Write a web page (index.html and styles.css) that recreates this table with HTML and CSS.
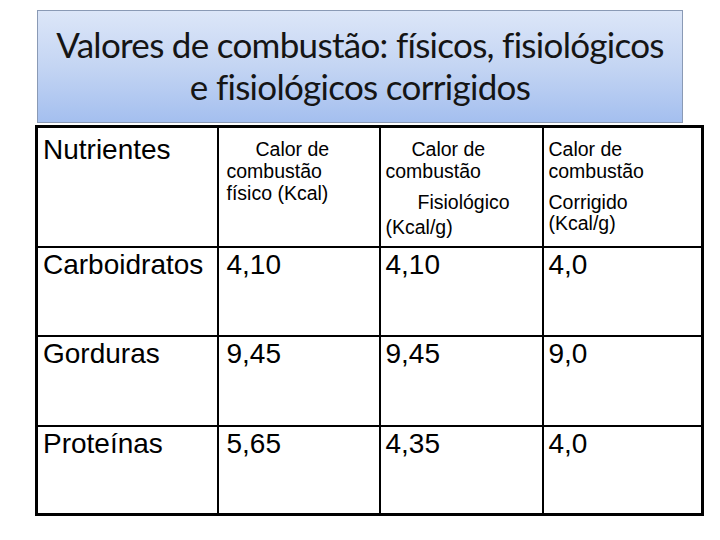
FILE: index.html
```html
<!DOCTYPE html>
<html lang="pt">
<head>
<meta charset="utf-8">
<title>Valores de combustão</title>
<link rel="stylesheet" href="styles.css">
</head>
<body>
<div class="slide">
  <div class="title-box">
    <h1 class="title">Valores de combustão: físicos, fisiológicos<br>e fisiológicos corrigidos</h1>
  </div>
  <table class="grid">
    <colgroup>
      <col class="c1"><col class="c2"><col class="c3"><col class="c4">
    </colgroup>
    <tr class="head">
      <td class="lead">Nutrientes</td>
      <td class="small col2">
        <div class="ind1">Calor de</div>
        <div>combustão</div>
        <div>físico (Kcal)</div>
      </td>
      <td class="small">
        <div class="ind2">Calor de</div>
        <div>combustão</div>
        <div class="ind3 gap">Fisiológico</div>
        <div class="gap2">(Kcal/g)</div>
      </td>
      <td class="small">
        <div>Calor de</div>
        <div>combustão</div>
        <div class="gap">Corrigido</div>
        <div class="tight">(Kcal/g)</div>
      </td>
    </tr>
    <tr class="r1">
      <td>Carboidratos</td><td class="col2">4,10</td><td>4,10</td><td>4,0</td>
    </tr>
    <tr class="r2">
      <td>Gorduras</td><td class="col2">9,45</td><td>9,45</td><td>9,0</td>
    </tr>
    <tr class="r3">
      <td>Proteínas</td><td class="col2">5,65</td><td>4,35</td><td>4,0</td>
    </tr>
  </table>
</div>
</body>
</html>
```
FILE: styles.css
```css
html, body {
  margin: 0;
  padding: 0;
  background: #ffffff;
}
.slide {
  width: 720px;
  height: 540px;
  padding-top: 10px;
  box-sizing: border-box;
}
.title-box {
  margin-left: 37px;
  width: 646px;
  height: 113px;
  box-sizing: border-box;
  border: 1px solid #8a9ab5;
  background: linear-gradient(to bottom, #dce6f8 0%, #c4d5f3 50%, #a4bfef 100%);
  display: flex;
  align-items: center;
  justify-content: center;
}
.title {
  margin: 0;
  font-family: Lato, "Open Sans", sans-serif;
  font-weight: normal;
  font-size: 35px;
  line-height: 42px;
  color: #151515;
  text-align: center;
  white-space: nowrap;
  letter-spacing: -0.7px;
  padding-bottom: 4px;
}
.grid {
  margin-top: 2px;
  margin-left: 35px;
  width: 666px;
  border-collapse: collapse;
  table-layout: fixed;
  border: 3px solid #000;
  font-family: "Liberation Sans", Arial, sans-serif;
  color: #000;
}
.c1 { width: 181px; }
.c2 { width: 162px; }
.c3 { width: 163px; }
.c4 { width: 160px; }
.grid td {
  border: 2px solid #000;
  vertical-align: top;
  padding: 1px 0 0 5px;
  font-size: 28px;
  line-height: 32px;
}
.grid td.col2 { padding-left: 8px; }
.head { height: 120px; }
.r1 { height: 89px; }
.r2 { height: 90px; }
.r3 { height: 89px; }
.grid td.lead {
  padding-top: 6px;
}
.grid td.small {
  font-size: 19.5px;
  line-height: 22px;
  padding-top: 10px;
}
.ind1 { padding-left: 29px; }
.ind2 { padding-left: 26px; }
.ind3 { padding-left: 32px; }
.gap { margin-top: 9px; }
.gap2 { margin-top: 3px; }
.tight { margin-top: -1px; }
```
